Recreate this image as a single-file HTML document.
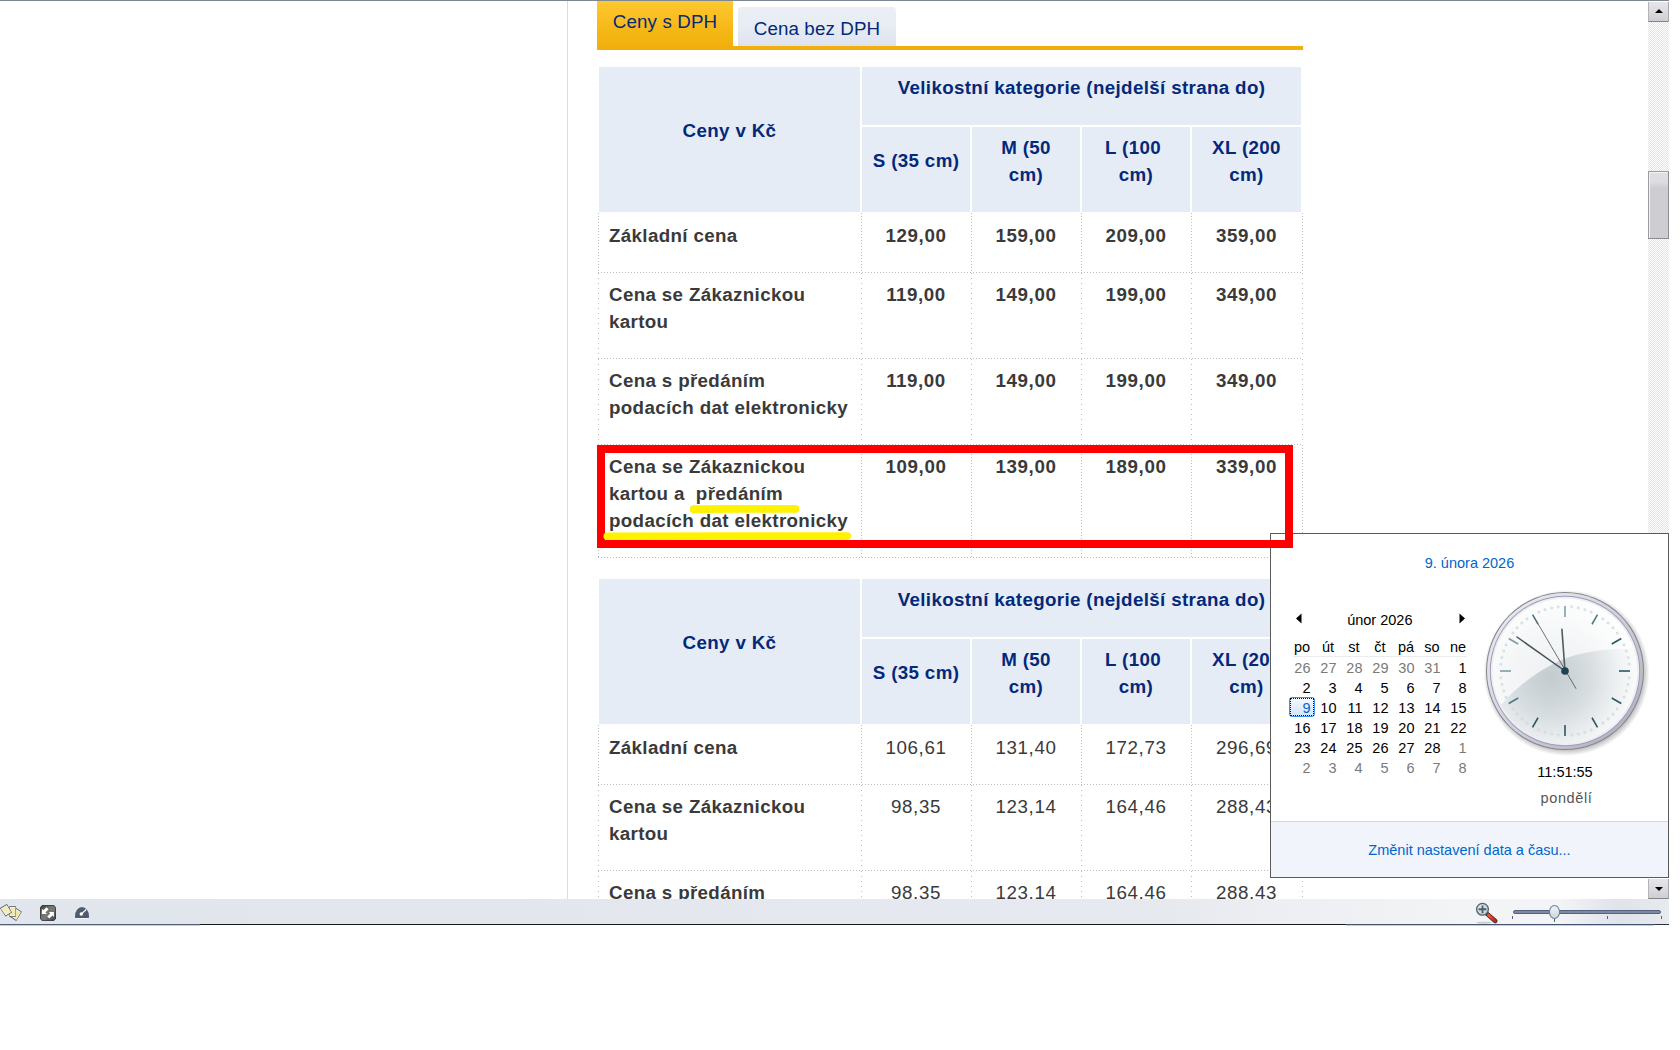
<!DOCTYPE html>
<html lang="cs"><head><meta charset="utf-8"><title>Ceny</title>
<style>
html,body{margin:0;padding:0;background:#fff;}
body{width:1680px;height:1050px;overflow:hidden;position:relative;font-family:"Liberation Sans",sans-serif;font-size:18.75px;line-height:27px;color:#3a3a3a;}
.a{position:absolute;}
.topline{left:0;top:0;width:1669px;height:1px;background:#7e868f;}
.vline{left:567px;top:1px;width:1px;height:898px;background:#dcdcdc;}
.tab1,.tab2{letter-spacing:0.12px;}
.tab1{left:597px;top:1px;width:136px;height:49px;background:linear-gradient(#fec830,#f5b716 60%,#f1ae0c);color:#04297a;text-align:center;}
.tab1 span{position:absolute;left:0;right:0;top:7px;}
.tabline{left:597px;top:46px;width:706px;height:4px;background:#f1ae0c;}
.tab2{left:738px;top:7px;width:158px;height:39px;border-radius:4px 4px 0 0;background:linear-gradient(#eaeef5,#e8ecf3 50%,#dde3ee);color:#04297a;text-align:center;}
.tab2 span{position:absolute;left:0;right:0;top:8px;}
.th{background:#e6ecf5;color:#04297a;font-weight:bold;text-align:center;letter-spacing:0.35px;}
.th span{position:absolute;left:0;right:0;}
.td{text-align:center;letter-spacing:0.57px;}
.td.l{text-align:left;font-weight:bold;letter-spacing:0.35px;white-space:nowrap;}
.b{font-weight:bold;}
.hd{height:1px;background-image:linear-gradient(90deg,#bdbdbd 1px,transparent 1px);background-size:3px 1px;}
.vd{width:1px;background-image:linear-gradient(180deg,#bdbdbd 1px,transparent 1px);background-size:1px 3px;}
.vd5{background-size:1px 5px;}
.red{left:597px;top:445px;width:680px;height:87px;border:8px solid #fe0000;z-index:30;}
.yl{z-index:31;}
/* scrollbar */
.sbtrack{left:1648px;top:22px;width:21px;height:855px;background-color:#fff;background-image:linear-gradient(45deg,#e3e3e3 25%,transparent 25%,transparent 75%,#e3e3e3 75%),linear-gradient(45deg,#e3e3e3 25%,transparent 25%,transparent 75%,#e3e3e3 75%);background-size:2px 2px;background-position:0 0,1px 1px;}
.sbbtn{left:1648px;width:19px;height:19px;background:linear-gradient(#e6e6ea,#dcdce0 50%,#cfcfd3);border-left:1px solid #b4b4b4;border-right:1px solid #a8a8a8;border-bottom:1px solid #858585;}
.sbthumb{left:1648px;top:171px;width:19px;height:66px;background:linear-gradient(#dfdfe4 0,#dcdce1 10px,#cdcdd2 16px,#cdcdd2 100%);border:1px solid #9c9c9c;border-right-color:#8e8e8e;border-bottom-color:#8a8a8a;box-shadow:inset 1px 1px 0 #f3f3f5;}
.arr{position:absolute;left:5.5px;width:0;height:0;border-left:4px solid transparent;border-right:4px solid transparent;}
/* status bar */
.status{left:0;top:899px;width:1669px;height:25px;background:linear-gradient(90deg,#e1e5ec 0%,#e3e6ed 30%,#e5e8ee 50%,#e6e9ee 70%,#eceef2 76%,#f0f2f4 84%,#f3f4f6 88%,#f3f4f6 93.5%,#e4e7ed 96%,#e0e4ea 97%,#e7eaef 100%);z-index:20;}
.stline1{left:0;top:924px;width:200px;height:1px;background:#51617a;z-index:21;}
.stline2{left:200px;top:924px;width:1469px;height:1px;background:linear-gradient(90deg,#16191d 0,#16191d 1145px,#43536f 1146px,#43536f 1454px,#30343a 1455px);z-index:21;}
.stline3{left:0;top:925px;width:200px;height:1px;background:#c3cee0;z-index:41;}
.rightwhite{left:1669px;top:0;width:11px;height:1050px;background:#fff;z-index:40;}
.botwhite{left:0;top:925px;width:1680px;height:124px;background:#fff;z-index:40;}
/* popup */
.pop{left:1270px;top:533px;width:397px;height:343px;border:1px solid #5b5b5b;background:#fff;z-index:25;font-family:"Liberation Sans","DejaVu Sans",sans-serif;font-size:14.5px;line-height:20px;color:#000;}
.pop .foot{left:0;top:287px;width:397px;height:56px;background:#f1f5fb;border-top:1px solid #ccd9ea;box-sizing:border-box;}
.pop .lnk{color:#0066cc;}
.pop .c{text-align:center;}
.pop .r{text-align:right;width:26px;}
.pop .g{color:#7a7a7a;}
.sel{left:18px;top:163px;width:24px;height:18px;border:1px solid #3794f2;border-radius:3px;background:linear-gradient(#f4f8fe,#d3e4fb);}
.sel i{position:absolute;left:0;top:0;right:0;bottom:0;border:1px dotted #111;}
.stline4{left:1346px;top:925px;width:308px;height:1px;background:#c5cfde;z-index:41;}
</style></head>
<body>
<div class="a topline"></div>
<div class="a vline"></div>
<div class="a tab1"><span>Ceny s DPH</span></div>
<div class="a tab2"><span>Cena bez DPH</span></div>
<div class="a tabline"></div>
<div class="a th" style="left:599px;top:67px;width:261px;height:145px"><span style="top:50px">Ceny v Kč</span></div>
<div class="a th" style="left:862px;top:67px;width:439px;height:58px"><span style="top:7px">Velikostní kategorie (nejdelší strana do)</span></div>
<div class="a th" style="left:862px;top:127px;width:108px;height:85px"><span style="top:20px">S (35 cm)</span></div>
<div class="a th" style="left:972px;top:127px;width:108px;height:85px"><span style="top:7px">M (50<br>cm)</span></div>
<div class="a th" style="left:1082px;top:127px;width:108px;height:85px"><span style="top:7px"><i style="position:relative;left:-3px;font-style:normal">L (100</i><br>cm)</span></div>
<div class="a th" style="left:1192px;top:127px;width:109px;height:85px"><span style="top:7px">XL (200<br>cm)</span></div>
<div class="a td l" style="left:609px;top:222px;width:250px">Základní cena</div>
<div class="a td b" style="left:862px;top:222px;width:108px">129,00</div>
<div class="a td b" style="left:972px;top:222px;width:108px">159,00</div>
<div class="a td b" style="left:1082px;top:222px;width:108px">209,00</div>
<div class="a td b" style="left:1192px;top:222px;width:109px">359,00</div>
<div class="a vd" style="left:598px;top:213px;height:59px"></div>
<div class="a vd" style="left:861px;top:213px;height:59px"></div>
<div class="a vd" style="left:971px;top:213px;height:59px"></div>
<div class="a vd" style="left:1081px;top:213px;height:59px"></div>
<div class="a vd" style="left:1191px;top:213px;height:59px"></div>
<div class="a vd" style="left:1302px;top:213px;height:59px"></div>
<div class="a td l" style="left:609px;top:281px;width:250px">Cena se Zákaznickou<br>kartou</div>
<div class="a td b" style="left:862px;top:281px;width:108px">119,00</div>
<div class="a td b" style="left:972px;top:281px;width:108px">149,00</div>
<div class="a td b" style="left:1082px;top:281px;width:108px">199,00</div>
<div class="a td b" style="left:1192px;top:281px;width:109px">349,00</div>
<div class="a vd vd5" style="left:598px;top:273px;height:85px"></div>
<div class="a vd vd5" style="left:861px;top:273px;height:85px"></div>
<div class="a vd vd5" style="left:971px;top:273px;height:85px"></div>
<div class="a vd vd5" style="left:1081px;top:273px;height:85px"></div>
<div class="a vd vd5" style="left:1191px;top:273px;height:85px"></div>
<div class="a vd vd5" style="left:1302px;top:273px;height:85px"></div>
<div class="a td l" style="left:609px;top:367px;width:250px">Cena s předáním<br>podacích dat elektronicky</div>
<div class="a td b" style="left:862px;top:367px;width:108px">119,00</div>
<div class="a td b" style="left:972px;top:367px;width:108px">149,00</div>
<div class="a td b" style="left:1082px;top:367px;width:108px">199,00</div>
<div class="a td b" style="left:1192px;top:367px;width:109px">349,00</div>
<div class="a vd vd5" style="left:598px;top:359px;height:85px"></div>
<div class="a vd vd5" style="left:861px;top:359px;height:85px"></div>
<div class="a vd vd5" style="left:971px;top:359px;height:85px"></div>
<div class="a vd vd5" style="left:1081px;top:359px;height:85px"></div>
<div class="a vd vd5" style="left:1191px;top:359px;height:85px"></div>
<div class="a vd vd5" style="left:1302px;top:359px;height:85px"></div>
<div class="a td l" style="left:609px;top:453px;width:250px">Cena se Zákaznickou<br>kartou a&nbsp; předáním<br>podacích dat elektronicky</div>
<div class="a td b" style="left:862px;top:453px;width:108px">109,00</div>
<div class="a td b" style="left:972px;top:453px;width:108px">139,00</div>
<div class="a td b" style="left:1082px;top:453px;width:108px">189,00</div>
<div class="a td b" style="left:1192px;top:453px;width:109px">339,00</div>
<div class="a vd" style="left:598px;top:445px;height:112px"></div>
<div class="a vd" style="left:861px;top:445px;height:112px"></div>
<div class="a vd" style="left:971px;top:445px;height:112px"></div>
<div class="a vd" style="left:1081px;top:445px;height:112px"></div>
<div class="a vd" style="left:1191px;top:445px;height:112px"></div>
<div class="a vd" style="left:1302px;top:445px;height:112px"></div>
<div class="a hd" style="left:598px;top:272px;width:705px"></div>
<div class="a hd" style="left:598px;top:358px;width:705px"></div>
<div class="a hd" style="left:598px;top:444px;width:705px"></div>
<div class="a hd" style="left:598px;top:557px;width:705px"></div>
<div class="a th" style="left:599px;top:579px;width:261px;height:145px"><span style="top:50px">Ceny v Kč</span></div>
<div class="a th" style="left:862px;top:579px;width:439px;height:58px"><span style="top:7px">Velikostní kategorie (nejdelší strana do)</span></div>
<div class="a th" style="left:862px;top:639px;width:108px;height:85px"><span style="top:20px">S (35 cm)</span></div>
<div class="a th" style="left:972px;top:639px;width:108px;height:85px"><span style="top:7px">M (50<br>cm)</span></div>
<div class="a th" style="left:1082px;top:639px;width:108px;height:85px"><span style="top:7px"><i style="position:relative;left:-3px;font-style:normal">L (100</i><br>cm)</span></div>
<div class="a th" style="left:1192px;top:639px;width:109px;height:85px"><span style="top:7px">XL (200<br>cm)</span></div>
<div class="a td l" style="left:609px;top:734px;width:250px">Základní cena</div>
<div class="a td" style="left:862px;top:734px;width:108px">106,61</div>
<div class="a td" style="left:972px;top:734px;width:108px">131,40</div>
<div class="a td" style="left:1082px;top:734px;width:108px">172,73</div>
<div class="a td" style="left:1192px;top:734px;width:109px">296,69</div>
<div class="a vd" style="left:598px;top:725px;height:59px"></div>
<div class="a vd" style="left:861px;top:725px;height:59px"></div>
<div class="a vd" style="left:971px;top:725px;height:59px"></div>
<div class="a vd" style="left:1081px;top:725px;height:59px"></div>
<div class="a vd" style="left:1191px;top:725px;height:59px"></div>
<div class="a vd" style="left:1302px;top:725px;height:59px"></div>
<div class="a td l" style="left:609px;top:793px;width:250px">Cena se Zákaznickou<br>kartou</div>
<div class="a td" style="left:862px;top:793px;width:108px">98,35</div>
<div class="a td" style="left:972px;top:793px;width:108px">123,14</div>
<div class="a td" style="left:1082px;top:793px;width:108px">164,46</div>
<div class="a td" style="left:1192px;top:793px;width:109px">288,43</div>
<div class="a vd vd5" style="left:598px;top:785px;height:85px"></div>
<div class="a vd vd5" style="left:861px;top:785px;height:85px"></div>
<div class="a vd vd5" style="left:971px;top:785px;height:85px"></div>
<div class="a vd vd5" style="left:1081px;top:785px;height:85px"></div>
<div class="a vd vd5" style="left:1191px;top:785px;height:85px"></div>
<div class="a vd vd5" style="left:1302px;top:785px;height:85px"></div>
<div class="a td l" style="left:609px;top:879px;width:250px">Cena s předáním<br>podacích dat elektronicky</div>
<div class="a td" style="left:862px;top:879px;width:108px">98,35</div>
<div class="a td" style="left:972px;top:879px;width:108px">123,14</div>
<div class="a td" style="left:1082px;top:879px;width:108px">164,46</div>
<div class="a td" style="left:1192px;top:879px;width:109px">288,43</div>
<div class="a vd vd5" style="left:598px;top:871px;height:85px"></div>
<div class="a vd vd5" style="left:861px;top:871px;height:85px"></div>
<div class="a vd vd5" style="left:971px;top:871px;height:85px"></div>
<div class="a vd vd5" style="left:1081px;top:871px;height:85px"></div>
<div class="a vd vd5" style="left:1191px;top:871px;height:85px"></div>
<div class="a vd vd5" style="left:1302px;top:871px;height:85px"></div>
<div class="a hd" style="left:598px;top:784px;width:705px"></div>
<div class="a hd" style="left:598px;top:870px;width:705px"></div>
<div class="a hd" style="left:598px;top:956px;width:705px"></div>
<!-- scrollbar -->
<div class="a sbtrack"></div>
<div class="a sbbtn" style="top:2px"><div class="arr" style="top:7px;border-bottom:4px solid #000"></div></div>
<div class="a sbthumb"></div>
<div class="a sbbtn" style="top:879px"><div class="arr" style="top:8px;border-top:4px solid #000"></div></div>
<!-- yellow highlighter strokes -->
<svg class="a yl" style="left:680px;top:500px" width="130" height="18"><path d="M13.6 9.2 C40 8.8,90 8.9,115.4 8.8" stroke="#fff200" stroke-width="7.8" stroke-linecap="round" fill="none"/></svg>
<svg class="a yl" style="left:595px;top:526px" width="265" height="20"><path d="M12.2 10.2 C80 10,180 9.9,252.2 9.9" stroke="#fff200" stroke-width="7.5" stroke-linecap="round" fill="none"/></svg>
<!-- red frame -->
<div class="a red"></div>
<!-- status bar -->
<div class="a status">
<svg class="a" style="left:0;top:4px" width="24" height="20" viewBox="0 0 24 20"><polygon points="16.20,5.10 21.80,8.70 16.20,18.00 10.00,13.70" fill="#4a5162"/><polygon points="16.18,5.98 21.00,9.07 16.18,17.07 10.85,13.37" fill="#fdfcf4"/><polygon points="16.16,6.86 20.19,9.45 16.16,16.14 11.69,13.05" fill="#f1e6a6"/><polygon points="9.30,3.10 15.80,3.10 15.80,13.70 9.30,13.70" fill="#4a5162"/><polygon points="9.76,3.84 15.35,3.84 15.35,12.96 9.76,12.96" fill="#fdfcf4"/><polygon points="10.21,4.58 14.89,4.58 14.89,12.22 10.21,12.22" fill="#f3e9ae"/><polygon points="0.00,5.10 6.90,1.05 11.90,9.60 5.50,13.40" fill="#4a5162"/><polygon points="0.85,5.41 6.78,1.92 11.08,9.28 5.58,12.54" fill="#fdfcf4"/><polygon points="1.70,5.71 6.67,2.80 10.27,8.95 5.66,11.69" fill="#f5ebb6"/></svg>
<svg class="a" style="left:40px;top:6px" width="16" height="16" viewBox="0 0 16 16"><defs><linearGradient id="gq" x1="0" y1="0" x2="1" y2="1"><stop offset="0" stop-color="#3a3a3a"/><stop offset="0.35" stop-color="#6f6f6f"/><stop offset="0.55" stop-color="#7a7a7a"/><stop offset="1" stop-color="#444"/></linearGradient></defs><path d="M2.2 0 H13.8 L16 2.2 V13.8 L13.8 16 H2.2 L0 13.8 V2.2Z" fill="#3b3b3b"/><path d="M2.5 0.8 H13.5 L15.2 2.5 V13.5 L13.5 15.2 H2.5 L0.8 13.5 V2.5Z" fill="url(#gq)"/><path d="M1.9 3.8 L1.9 8.9 L6.95 8.9 L5.46 7.41 L8.56 4.31 L6.44 2.19 L3.34 5.29Z" fill="#fff"/><path d="M1.9 3.8 L1.9 8.9 L6.95 8.9 L5.46 7.41 L8.56 4.31 L6.44 2.19 L3.34 5.29Z" fill="#fff" transform="rotate(180 7.9 7.9)"/></svg>
<svg class="a" style="left:75px;top:8px" width="14" height="12" viewBox="0 0 14 12"><path d="M0.5 11.6 H13.5" stroke="#f4f6f9" stroke-width="0.9"/><path d="M0 9.2 A7 9.2 0 0 1 14 9.2 L14 10.2 Q14 11 13.2 11 L0.8 11 Q0 11 0 10.2Z" fill="#4e5c70"/><circle cx="6.3" cy="7.1" r="1.75" fill="#fff"/><path d="M6.3 7.1 L11.2 2.5" stroke="#fff" stroke-width="1.3"/></svg>
<svg class="a" style="left:1474px;top:3px" width="26" height="22" viewBox="0 0 26 22"><defs><radialGradient id="gl" cx="0.4" cy="0.35" r="0.7"><stop offset="0" stop-color="#e3edef"/><stop offset="1" stop-color="#b9cbd1"/></radialGradient><linearGradient id="hd" x1="0" y1="0" x2="1" y2="0"><stop offset="0" stop-color="#e8563a"/><stop offset="1" stop-color="#b52a18"/></linearGradient></defs><ellipse cx="10" cy="20.6" rx="8" ry="0.9" fill="#000" opacity="0.18"/><path d="M13.4 12.2 L21.2 19" stroke="#3f2a28" stroke-width="4.4" stroke-linecap="round"/><path d="M14.6 13.2 L21.1 18.9" stroke="url(#hd)" stroke-width="3.1" stroke-linecap="round"/><circle cx="8.5" cy="7.3" r="5.9" fill="url(#gl)" stroke="#566068" stroke-width="1.3"/><path d="M4.6 7.3 H12.4 M8.5 3.4 V11.2" stroke="#49606e" stroke-width="1.9"/></svg>
<div class="a" style="left:1513px;top:11px;width:148px;height:4px;border-radius:2px;background:#7d8aa4;border:1px solid #55627e;box-sizing:border-box;"></div>
<div class="a" style="left:1512px;top:17px;width:1px;height:3px;background:#5d6066"></div>
<div class="a" style="left:1554px;top:20px;width:1px;height:3px;background:#5d6066"></div>
<div class="a" style="left:1607px;top:17px;width:1px;height:3px;background:#5d6066"></div>
<div class="a" style="left:1661px;top:17px;width:1px;height:3px;background:#5d6066"></div>
<div class="a" style="left:1549px;top:6px;width:11px;height:14px;border:1px solid #6d8296;border-radius:50%;background:linear-gradient(#f1f4f7,#ccd5de);box-sizing:border-box;"></div>
</div>
<div class="a stline1"></div><div class="a stline2"></div><div class="a stline3"></div><div class="a stline4"></div>
<div class="a rightwhite"></div><div class="a botwhite"></div>
<div class="a pop">
<div class="a c lnk" style="left:78.5px;top:19px;width:240px;">9. února 2026</div>
<div class="a c " style="left:-11.2px;top:76px;width:240px;">únor 2026</div>
<svg class="a" style="left:24px;top:79px" width="8" height="11" viewBox="0 0 8 11"><path d="M6.5 0.5 L6.5 10.5 L1 5.5Z" fill="#000"/></svg>
<svg class="a" style="left:187px;top:79px" width="8" height="11" viewBox="0 0 8 11"><path d="M1.5 0.5 L1.5 10.5 L7 5.5Z" fill="#000"/></svg>
<div class="a" style="left:22px;top:122px;width:174px;height:1px;background:#ececec"></div>
<div class="a sel"><i></i></div>
<div class="a c" style="left:18.0px;top:103px;width:26px">po</div>
<div class="a c" style="left:44.0px;top:103px;width:26px">út</div>
<div class="a c" style="left:70.0px;top:103px;width:26px">st</div>
<div class="a c" style="left:96.0px;top:103px;width:26px">čt</div>
<div class="a c" style="left:122.0px;top:103px;width:26px">pá</div>
<div class="a c" style="left:148.0px;top:103px;width:26px">so</div>
<div class="a c" style="left:174.0px;top:103px;width:26px">ne</div>
<div class="a r g" style="left:13.5px;top:124px">26</div>
<div class="a r g" style="left:39.5px;top:124px">27</div>
<div class="a r g" style="left:65.5px;top:124px">28</div>
<div class="a r g" style="left:91.5px;top:124px">29</div>
<div class="a r g" style="left:117.5px;top:124px">30</div>
<div class="a r g" style="left:143.5px;top:124px">31</div>
<div class="a r" style="left:169.5px;top:124px">1</div>
<div class="a r" style="left:13.5px;top:144px">2</div>
<div class="a r" style="left:39.5px;top:144px">3</div>
<div class="a r" style="left:65.5px;top:144px">4</div>
<div class="a r" style="left:91.5px;top:144px">5</div>
<div class="a r" style="left:117.5px;top:144px">6</div>
<div class="a r" style="left:143.5px;top:144px">7</div>
<div class="a r" style="left:169.5px;top:144px">8</div>
<div class="a r lnk" style="left:13.5px;top:164px">9</div>
<div class="a r" style="left:39.5px;top:164px">10</div>
<div class="a r" style="left:65.5px;top:164px">11</div>
<div class="a r" style="left:91.5px;top:164px">12</div>
<div class="a r" style="left:117.5px;top:164px">13</div>
<div class="a r" style="left:143.5px;top:164px">14</div>
<div class="a r" style="left:169.5px;top:164px">15</div>
<div class="a r" style="left:13.5px;top:184px">16</div>
<div class="a r" style="left:39.5px;top:184px">17</div>
<div class="a r" style="left:65.5px;top:184px">18</div>
<div class="a r" style="left:91.5px;top:184px">19</div>
<div class="a r" style="left:117.5px;top:184px">20</div>
<div class="a r" style="left:143.5px;top:184px">21</div>
<div class="a r" style="left:169.5px;top:184px">22</div>
<div class="a r" style="left:13.5px;top:204px">23</div>
<div class="a r" style="left:39.5px;top:204px">24</div>
<div class="a r" style="left:65.5px;top:204px">25</div>
<div class="a r" style="left:91.5px;top:204px">26</div>
<div class="a r" style="left:117.5px;top:204px">27</div>
<div class="a r" style="left:143.5px;top:204px">28</div>
<div class="a r g" style="left:169.5px;top:204px">1</div>
<div class="a r g" style="left:13.5px;top:224px">2</div>
<div class="a r g" style="left:39.5px;top:224px">3</div>
<div class="a r g" style="left:65.5px;top:224px">4</div>
<div class="a r g" style="left:91.5px;top:224px">5</div>
<div class="a r g" style="left:117.5px;top:224px">6</div>
<div class="a r g" style="left:143.5px;top:224px">7</div>
<div class="a r g" style="left:169.5px;top:224px">8</div>
<svg class="a" style="left:209px;top:52px" width="170" height="170" viewBox="-85 -85 170 170">
<defs>
<linearGradient id="ring" x1="0" y1="0" x2="1" y2="1"><stop offset="0" stop-color="#efeff3"/><stop offset="0.5" stop-color="#d2d2da"/><stop offset="1" stop-color="#a9a9b4"/></linearGradient>
<radialGradient id="face" gradientUnits="userSpaceOnUse" cx="-14" cy="6" r="84"><stop offset="0" stop-color="#c2cbcf"/><stop offset="0.45" stop-color="#d6dcdf"/><stop offset="0.8" stop-color="#eef1f2"/><stop offset="1" stop-color="#f9fafa"/></radialGradient>
<linearGradient id="gloss" x1="0" y1="0" x2="0.6" y2="1"><stop offset="0" stop-color="#fff" stop-opacity="0.78"/><stop offset="1" stop-color="#fff" stop-opacity="0.68"/></linearGradient>
<radialGradient id="shadow" cx="0.5" cy="0.5" r="0.5"><stop offset="0.93" stop-color="#000" stop-opacity="0.22"/><stop offset="1" stop-color="#000" stop-opacity="0"/></radialGradient>
<clipPath id="fc"><circle r="72.5"/></clipPath>
</defs>
<circle cx="1.5" cy="2" r="83" fill="url(#shadow)"/>
<circle r="79" fill="#858591"/>
<circle r="78" fill="url(#ring)"/>
<circle r="75.2" fill="#9d9dbb"/>
<circle r="74.2" fill="#eceef2"/>
<circle r="72.2" fill="url(#face)"/>
<path clip-path="url(#fc)" d="M-80 -80 L80 -80 L80 -22 C40 -24,10 -18,-10 -8 C-35 5,-52 20,-62 32 L-80 40Z" fill="url(#gloss)"/>
<circle cx="6.74" cy="-64.15" r="1.0" fill="#fff" stroke="#aebcc0" stroke-width="0.55"/>
<circle cx="13.41" cy="-63.09" r="1.0" fill="#fff" stroke="#aebcc0" stroke-width="0.55"/>
<circle cx="19.93" cy="-61.34" r="1.0" fill="#fff" stroke="#aebcc0" stroke-width="0.55"/>
<circle cx="26.23" cy="-58.92" r="1.0" fill="#fff" stroke="#aebcc0" stroke-width="0.55"/>
<circle cx="37.91" cy="-52.18" r="1.0" fill="#fff" stroke="#aebcc0" stroke-width="0.55"/>
<circle cx="43.16" cy="-47.93" r="1.0" fill="#fff" stroke="#aebcc0" stroke-width="0.55"/>
<circle cx="47.93" cy="-43.16" r="1.0" fill="#fff" stroke="#aebcc0" stroke-width="0.55"/>
<circle cx="52.18" cy="-37.91" r="1.0" fill="#fff" stroke="#aebcc0" stroke-width="0.55"/>
<circle cx="58.92" cy="-26.23" r="1.0" fill="#fff" stroke="#aebcc0" stroke-width="0.55"/>
<circle cx="61.34" cy="-19.93" r="1.0" fill="#fff" stroke="#aebcc0" stroke-width="0.55"/>
<circle cx="63.09" cy="-13.41" r="1.0" fill="#fff" stroke="#aebcc0" stroke-width="0.55"/>
<circle cx="64.15" cy="-6.74" r="1.0" fill="#fff" stroke="#aebcc0" stroke-width="0.55"/>
<circle cx="64.15" cy="6.74" r="1.0" fill="#fff" stroke="#aebcc0" stroke-width="0.55"/>
<circle cx="63.09" cy="13.41" r="1.0" fill="#fff" stroke="#aebcc0" stroke-width="0.55"/>
<circle cx="61.34" cy="19.93" r="1.0" fill="#fff" stroke="#aebcc0" stroke-width="0.55"/>
<circle cx="58.92" cy="26.23" r="1.0" fill="#fff" stroke="#aebcc0" stroke-width="0.55"/>
<circle cx="52.18" cy="37.91" r="1.0" fill="#fff" stroke="#aebcc0" stroke-width="0.55"/>
<circle cx="47.93" cy="43.16" r="1.0" fill="#fff" stroke="#aebcc0" stroke-width="0.55"/>
<circle cx="43.16" cy="47.93" r="1.0" fill="#fff" stroke="#aebcc0" stroke-width="0.55"/>
<circle cx="37.91" cy="52.18" r="1.0" fill="#fff" stroke="#aebcc0" stroke-width="0.55"/>
<circle cx="26.23" cy="58.92" r="1.0" fill="#fff" stroke="#aebcc0" stroke-width="0.55"/>
<circle cx="19.93" cy="61.34" r="1.0" fill="#fff" stroke="#aebcc0" stroke-width="0.55"/>
<circle cx="13.41" cy="63.09" r="1.0" fill="#fff" stroke="#aebcc0" stroke-width="0.55"/>
<circle cx="6.74" cy="64.15" r="1.0" fill="#fff" stroke="#aebcc0" stroke-width="0.55"/>
<circle cx="-6.74" cy="64.15" r="1.0" fill="#fff" stroke="#aebcc0" stroke-width="0.55"/>
<circle cx="-13.41" cy="63.09" r="1.0" fill="#fff" stroke="#aebcc0" stroke-width="0.55"/>
<circle cx="-19.93" cy="61.34" r="1.0" fill="#fff" stroke="#aebcc0" stroke-width="0.55"/>
<circle cx="-26.23" cy="58.92" r="1.0" fill="#fff" stroke="#aebcc0" stroke-width="0.55"/>
<circle cx="-37.91" cy="52.18" r="1.0" fill="#fff" stroke="#aebcc0" stroke-width="0.55"/>
<circle cx="-43.16" cy="47.93" r="1.0" fill="#fff" stroke="#aebcc0" stroke-width="0.55"/>
<circle cx="-47.93" cy="43.16" r="1.0" fill="#fff" stroke="#aebcc0" stroke-width="0.55"/>
<circle cx="-52.18" cy="37.91" r="1.0" fill="#fff" stroke="#aebcc0" stroke-width="0.55"/>
<circle cx="-58.92" cy="26.23" r="1.0" fill="#fff" stroke="#aebcc0" stroke-width="0.55"/>
<circle cx="-61.34" cy="19.93" r="1.0" fill="#fff" stroke="#aebcc0" stroke-width="0.55"/>
<circle cx="-63.09" cy="13.41" r="1.0" fill="#fff" stroke="#aebcc0" stroke-width="0.55"/>
<circle cx="-64.15" cy="6.74" r="1.0" fill="#fff" stroke="#aebcc0" stroke-width="0.55"/>
<circle cx="-64.15" cy="-6.74" r="1.0" fill="#fff" stroke="#aebcc0" stroke-width="0.55"/>
<circle cx="-63.09" cy="-13.41" r="1.0" fill="#fff" stroke="#aebcc0" stroke-width="0.55"/>
<circle cx="-61.34" cy="-19.93" r="1.0" fill="#fff" stroke="#aebcc0" stroke-width="0.55"/>
<circle cx="-58.92" cy="-26.23" r="1.0" fill="#fff" stroke="#aebcc0" stroke-width="0.55"/>
<circle cx="-52.18" cy="-37.91" r="1.0" fill="#fff" stroke="#aebcc0" stroke-width="0.55"/>
<circle cx="-47.93" cy="-43.16" r="1.0" fill="#fff" stroke="#aebcc0" stroke-width="0.55"/>
<circle cx="-43.16" cy="-47.93" r="1.0" fill="#fff" stroke="#aebcc0" stroke-width="0.55"/>
<circle cx="-37.91" cy="-52.18" r="1.0" fill="#fff" stroke="#aebcc0" stroke-width="0.55"/>
<circle cx="-26.23" cy="-58.92" r="1.0" fill="#fff" stroke="#aebcc0" stroke-width="0.55"/>
<circle cx="-19.93" cy="-61.34" r="1.0" fill="#fff" stroke="#aebcc0" stroke-width="0.55"/>
<circle cx="-13.41" cy="-63.09" r="1.0" fill="#fff" stroke="#aebcc0" stroke-width="0.55"/>
<circle cx="-6.74" cy="-64.15" r="1.0" fill="#fff" stroke="#aebcc0" stroke-width="0.55"/>
<line x1="0.00" y1="-54.00" x2="0.00" y2="-65.00" stroke="#7d9ea6" stroke-width="1.6"/>
<line x1="27.00" y1="-46.77" x2="32.50" y2="-56.29" stroke="#4f7a84" stroke-width="1.6"/>
<line x1="46.77" y1="-27.00" x2="56.29" y2="-32.50" stroke="#2a5864" stroke-width="1.6"/>
<line x1="54.00" y1="-0.00" x2="65.00" y2="-0.00" stroke="#2a5864" stroke-width="1.6"/>
<line x1="46.77" y1="27.00" x2="56.29" y2="32.50" stroke="#2a5864" stroke-width="1.6"/>
<line x1="27.00" y1="46.77" x2="32.50" y2="56.29" stroke="#2a5864" stroke-width="1.6"/>
<line x1="0.00" y1="54.00" x2="0.00" y2="65.00" stroke="#2a5864" stroke-width="1.6"/>
<line x1="-27.00" y1="46.77" x2="-32.50" y2="56.29" stroke="#2a5864" stroke-width="1.6"/>
<line x1="-46.77" y1="27.00" x2="-56.29" y2="32.50" stroke="#4f7a84" stroke-width="1.6"/>
<line x1="-54.00" y1="0.00" x2="-65.00" y2="0.00" stroke="#7d9ea6" stroke-width="1.6"/>
<line x1="-46.77" y1="-27.00" x2="-56.29" y2="-32.50" stroke="#7d9ea6" stroke-width="1.6"/>
<line x1="-27.00" y1="-46.77" x2="-32.50" y2="-56.29" stroke="#7d9ea6" stroke-width="1.6"/>
<line x1="0" y1="0" x2="-3.1" y2="-41.7" stroke="#4d5b63" stroke-width="1.6" stroke-linecap="round"/>
<line x1="0" y1="0" x2="-48" y2="-34" stroke="#45525a" stroke-width="1.5" stroke-linecap="round"/>
<line x1="11.1" y1="17.8" x2="-32.2" y2="-56.2" stroke="#2b3a42" stroke-width="0.7"/>
<circle r="3.8" fill="#1c4453"/>
</svg>
<div class="a c " style="left:174.0px;top:228px;width:240px;">11:51:55</div>
<div class="a c " style="left:175.5px;top:254px;width:240px;color:#555;letter-spacing:0.6px">pondělí</div>
<div class="a foot"></div>
<div class="a c lnk" style="left:48.5px;top:306px;width:300px;">Změnit nastavení data a času...</div>
</div>
</body></html>
